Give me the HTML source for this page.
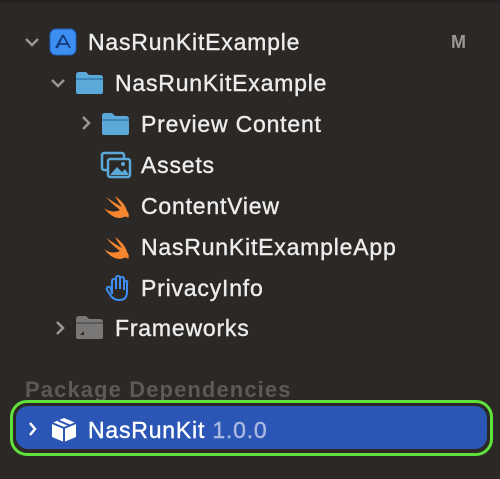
<!DOCTYPE html><html><head><style>
body{margin:0;width:500px;height:479px;background:#2b2826;position:relative;overflow:hidden;font-family:"Liberation Sans",sans-serif;color:#ececec;font-size:23px}
.t{position:absolute;line-height:24px;white-space:nowrap;letter-spacing:0.8px;-webkit-text-stroke:0.4px currentColor}
svg{position:absolute}
</style></head><body>
<div style="position:absolute;left:0;top:0;width:500px;height:3px;background:#222"></div>
<svg style="left:24px;top:36px" width="16" height="12"><path d="M2 3l6 6 6-6" stroke="#9a9896" stroke-width="2.5" fill="none"/></svg>
<svg style="left:49px;top:28px" width="28" height="28"><rect x="1" y="1" width="26" height="26" rx="6" fill="#3d8ef0" stroke="#1e5fc0"/><path d="M14 7l-7 13M14 7l7 13M10 16h10M12 11l-4 9" stroke="#123a7a" stroke-width="1.8" fill="none"/></svg>
<div class="t" style="left:88px;top:30px">NasRunKitExample</div>
<div class="t" style="left:451px;top:30px;color:#9a9896;font-weight:bold;font-size:18px;-webkit-text-stroke:0;letter-spacing:0">M</div>
<svg style="left:50px;top:77px" width="16" height="12"><path d="M2 3l6 6 6-6" stroke="#9a9896" stroke-width="2.5" fill="none"/></svg>
<svg style="left:75px;top:71px" width="29" height="24"><path d="M1 4q0-3 3-3h7l3 3h11q3 0 3 3v14q0 2-2 2H3q-2 0-2-2z" fill="#5aa9d8"/><rect x="1" y="7" width="27" height="2" fill="#3c86b8"/></svg>
<div class="t" style="left:115px;top:71px">NasRunKitExample</div>
<svg style="left:80px;top:115px" width="12" height="16"><path d="M3 2l6 6-6 6" stroke="#9a9896" stroke-width="2.5" fill="none"/></svg>
<svg style="left:101px;top:112px" width="29" height="24"><path d="M1 4q0-3 3-3h7l3 3h11q3 0 3 3v14q0 2-2 2H3q-2 0-2-2z" fill="#5aa9d8"/><rect x="1" y="7" width="27" height="2" fill="#3c86b8"/></svg>
<div class="t" style="left:141px;top:112px">Preview Content</div>
<svg style="left:100px;top:151px" width="32" height="28"><rect x="2" y="2" width="22" height="17" rx="2" fill="none" stroke="#5aa9d8" stroke-width="2.5"/><rect x="8" y="8" width="22" height="18" rx="2" fill="#2b2826" stroke="#5aa9d8" stroke-width="2.5"/><path d="M10 24l7-8 5 5 3-3 4 6z" fill="#5aa9d8"/><circle cx="23" cy="13" r="2" fill="#5aa9d8"/></svg>
<div class="t" style="left:141px;top:153px">Assets</div>
<svg style="left:102px;top:194px" width="28" height="24"><path d="M2 14q8 6 16 2q-8-6-14-13q9 6 16 10q-5-7-7-11q10 7 12 15q3 4 1 7q-1-2-4-1q-10 4-20-9z" fill="#f5852f"/></svg>
<div class="t" style="left:141px;top:194px">ContentView</div>
<svg style="left:102px;top:235px" width="28" height="24"><path d="M2 14q8 6 16 2q-8-6-14-13q9 6 16 10q-5-7-7-11q10 7 12 15q3 4 1 7q-1-2-4-1q-10 4-20-9z" fill="#f5852f"/></svg>
<div class="t" style="left:141px;top:235px">NasRunKitExampleApp</div>
<svg style="left:105px;top:274px" width="24" height="28"><path d="M7 20V7q0-2 2-2t2 2v8V4q0-2 2-2t2 2v11V5q0-2 2-2t2 2v11V9q0-2 2-2t1 2v9q0 8-8 8q-5 0-8-4l-4-6q-1-2 1-3t3 2z" fill="none" stroke="#3d8ef0" stroke-width="2"/></svg>
<div class="t" style="left:141px;top:276px">PrivacyInfo</div>
<svg style="left:54px;top:320px" width="12" height="16"><path d="M3 2l6 6-6 6" stroke="#9a9896" stroke-width="2.5" fill="none"/></svg>
<svg style="left:75px;top:315px" width="29" height="25"><path d="M1 4q0-3 3-3h7l3 3h11q3 0 3 3v15q0 2-2 2H3q-2 0-2-2z" fill="#7a7876"/><rect x="1" y="7" width="27" height="2" fill="#5e5c5a"/><path d="M5 20l4-4v4z" fill="#2b2826"/></svg>
<div class="t" style="left:115px;top:316px">Frameworks</div>
<div class="t" style="left:25px;top:378px;color:#5c5a58;font-weight:bold;font-size:22px;-webkit-text-stroke:0;letter-spacing:1.1px">Package Dependencies</div>
<div style="position:absolute;left:10px;top:400px;width:477px;height:50px;border:3.5px solid #5fe23c;border-radius:17px;background:#2b2826"></div>
<div style="position:absolute;left:16px;top:406px;width:471px;height:43px;border-radius:12px;background:#2b56b5"></div>
<svg style="left:27px;top:421px" width="12" height="16"><path d="M3 2l5 6-5 6" stroke="#fff" stroke-width="2.5" fill="none"/></svg>
<svg style="left:50px;top:416px" width="28" height="28"><path d="M14 2l12 5v14l-12 5-12-5V7z" fill="#fff"/><path d="M2 7l12 5 12-5M14 12v14M8 4.5l12 5" stroke="#2b56b5" stroke-width="2" fill="none"/></svg>
<div class="t" style="left:88px;top:418px;color:#fff">NasRunKit <span style="color:#a8b8e0">1.0.0</span></div>
</body></html>
